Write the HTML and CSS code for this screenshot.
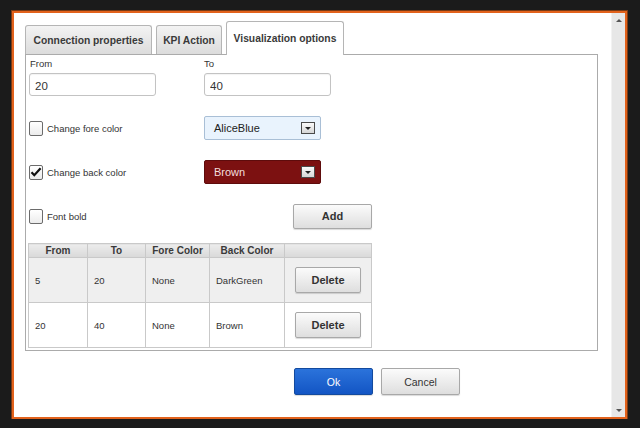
FILE: index.html
```html
<!DOCTYPE html>
<html lang="en">
<head>
  <meta charset="UTF-8">
  <title>KPI settings</title>
  <link rel="stylesheet" href="styles.css">
</head>
<body>

<!-- Dialog window -->
<div class="dialog">
  <div class="dialog-body">

    <!-- Tabs -->
    <div class="tabs">
      <div class="tab tab-conn">Connection properties</div>
      <div class="tab tab-kpi">KPI Action</div>
      <div class="tab tab-vis active">Visualization options</div>
    </div>

    <!-- Tab panel -->
    <div class="panel">
      <div class="row labels">
        <div class="col-left">From</div>
        <div class="col-right">To</div>
      </div>
      <div class="row inputs">
        <div class="col-left"><input type="text" class="text-box" value="20"></div>
        <div class="col-right"><input type="text" class="text-box" value="40"></div>
      </div>

      <div class="row option option-fore">
        <div class="col-left">
          <label class="check"><span class="box"></span>Change fore color</label>
        </div>
        <div class="col-right">
          <div class="select select-light">
            <span>AliceBlue</span>
            <span class="arrow"></span>
          </div>
        </div>
      </div>

      <div class="row option option-back">
        <div class="col-left">
          <label class="check">
            <span class="box">
              <svg width="12" height="12" viewBox="0 0 12 12"><path d="M1.5 6.2 L4.3 9.2 L10.6 2.2" fill="none" stroke="#111" stroke-width="2.2"/></svg>
            </span>Change back color
          </label>
        </div>
        <div class="col-right">
          <div class="select select-brown">
            <span>Brown</span>
            <span class="arrow"></span>
          </div>
        </div>
      </div>

      <div class="row option option-bold">
        <div class="col-left">
          <label class="check"><span class="box"></span>Font bold</label>
        </div>
        <div class="col-right">
          <button class="btn btn-add">Add</button>
        </div>
      </div>

      <table class="ranges">
        <thead>
          <tr>
            <th class="c-from">From</th>
            <th class="c-to">To</th>
            <th class="c-fore">Fore Color</th>
            <th class="c-back">Back Color</th>
            <th class="c-act"></th>
          </tr>
        </thead>
        <tbody>
          <tr class="alt">
            <td>5</td>
            <td>20</td>
            <td>None</td>
            <td>DarkGreen</td>
            <td><button class="btn btn-del">Delete</button></td>
          </tr>
          <tr>
            <td>20</td>
            <td>40</td>
            <td>None</td>
            <td>Brown</td>
            <td><button class="btn btn-del">Delete</button></td>
          </tr>
        </tbody>
      </table>
    </div>

    <!-- Dialog buttons -->
    <div class="actions">
      <button class="btn btn-ok">Ok</button>
      <button class="btn btn-cancel">Cancel</button>
    </div>
  </div>

  <!-- Scrollbar -->
  <div class="scrollbar">
    <span class="up"></span>
    <span class="down"></span>
  </div>
</div>

</body>
</html>
```

FILE: styles.css
```css
body {
  margin: 0;
  padding: 11px 0 0 12px;
  background-color: #1b1b1b;
  font-family: 'Liberation Sans', Arial, sans-serif;
  color: #333;
}

.dialog {
  width: 611px;
  height: 404px;
  border: 2px solid #e2621c;
  background-color: #fff;
  display: flex;
  box-shadow: 0 0 0 1px #7a3a14;
}

.dialog-body {
  flex: 1;
  padding: 8px 0 0 11px;
}

/* Tabs */
.tabs {
  display: flex;
  align-items: flex-end;
  gap: 4px;
  height: 33px;
}

.tab {
  box-sizing: border-box;
  height: 29px;
  border: 1px solid #b5b5b5;
  border-bottom: none;
  border-radius: 3px 3px 0 0;
  background: linear-gradient(#f3f3f3, #dcdcdc);
  font-size: 10.3px;
  font-weight: bold;
  color: #3a3a3a;
  display: flex;
  align-items: center;
  justify-content: center;
}

.tab-conn { width: 127px; }
.tab-kpi { width: 66px; }

.tab-vis {
  width: 118px;
  height: 34px;
  margin-bottom: -1px;
  background: #fff;
  position: relative;
  z-index: 1;
}

/* Panel */
.panel {
  box-sizing: border-box;
  width: 573px;
  height: 297px;
  border: 1px solid #ababab;
  padding: 2px 0 0 3px;
}

.row {
  display: flex;
  align-items: center;
}

.col-left {
  width: 175px;
}

.labels {
  font-size: 9.5px;
  height: 12px;
  padding-left: 1px;
}

.labels .col-left {
  width: 174px;
}

.inputs {
  margin-top: 4px;
}

.text-box {
  box-sizing: border-box;
  width: 127px;
  height: 23px;
  border: 1px solid #c3c3c3;
  border-radius: 3px;
  padding: 2px 5px 0;
  font-family: 'Liberation Sans', Arial, sans-serif;
  font-size: 11.5px;
  color: #333;
  box-shadow: inset 0 1px 1px rgba(0, 0, 0, 0.05);
}

.option {
  height: 24px;
}

.option-fore { margin-top: 20px; }
.option-back { margin-top: 20px; }
.option-bold { margin-top: 20px; }

.check {
  display: flex;
  align-items: center;
  font-size: 9.5px;
  color: #333;
}

.check .box {
  box-sizing: border-box;
  width: 14px;
  height: 15px;
  border: 1px solid #6b6b6b;
  border-radius: 2px;
  background: linear-gradient(#fff, #ececec);
  margin-right: 4px;
  display: flex;
  align-items: center;
  justify-content: center;
}

.select {
  box-sizing: border-box;
  width: 117px;
  height: 24px;
  border-radius: 2px;
  padding: 0 5px 0 9px;
  display: flex;
  align-items: center;
  justify-content: space-between;
  font-size: 11px;
}

.select-light {
  background-color: #e9f3fd;
  border: 1px solid #a9bfd6;
  color: #222;
}

.select-brown {
  background-color: #7c1111;
  border: 1px solid #5e0c0c;
  color: #f3dede;
}

.select .arrow {
  box-sizing: border-box;
  width: 14px;
  height: 12px;
  border: 1px solid #4a4a4a;
  background: linear-gradient(#fafafa, #d6d6d6);
  position: relative;
}

.select .arrow::after {
  content: '';
  position: absolute;
  left: 3px;
  top: 4px;
  border-left: 3px solid transparent;
  border-right: 3px solid transparent;
  border-top: 3px solid #222;
}

/* Buttons */
.btn {
  box-sizing: border-box;
  border: 1px solid #a8a8a8;
  border-radius: 2px;
  background: linear-gradient(#fbfbfb, #dedede);
  font-family: 'Liberation Sans', Arial, sans-serif;
  font-size: 11px;
  font-weight: bold;
  color: #333;
  box-shadow: 0 1px 1px rgba(0, 0, 0, 0.15);
  padding: 0;
}

.btn-add {
  width: 79px;
  height: 25px;
  margin-left: 89px;
}

/* Range table */
.ranges {
  margin: 15px 0 0 -1px;
  border-collapse: collapse;
  font-size: 9.5px;
  color: #333;
}

.ranges th,
.ranges td {
  border: 1px solid #c9c9c9;
  padding: 0;
}

.ranges th {
  height: 13px;
  background: linear-gradient(#ececec, #d9d9d9);
  font-size: 10px;
  font-weight: bold;
  color: #3a3a3a;
  text-align: center;
}

.ranges td {
  height: 44px;
  padding-left: 6px;
}

.ranges tr.alt td {
  background-color: #efefef;
}

.c-from { width: 58px; }
.c-to { width: 57px; }
.c-fore { width: 63px; }
.c-back { width: 74px; }
.c-act { width: 86px; }

.btn-del {
  width: 66px;
  height: 26px;
  margin-left: 4px;
  font-size: 11px;
}

/* Dialog actions */
.actions {
  display: flex;
  gap: 8px;
  margin: 17px 0 0 269px;
}

.btn-ok {
  width: 79px;
  height: 27px;
  background: linear-gradient(#2b73db, #1355c4);
  border-color: #134a9e;
  color: #fff;
  font-weight: normal;
  font-size: 10.5px;
}

.btn-cancel {
  width: 79px;
  height: 27px;
  font-weight: normal;
  font-size: 10.5px;
}

/* Scrollbar */
.scrollbar {
  width: 13px;
  background-color: #e7e7e7;
  border-left: 1px solid #f2f2f2;
  display: flex;
  flex-direction: column;
  justify-content: space-between;
  align-items: center;
  padding: 6px 0 5px;
}

.scrollbar .up {
  border-left: 3px solid transparent;
  border-right: 3px solid transparent;
  border-bottom: 3px solid #555;
}

.scrollbar .down {
  border-left: 3px solid transparent;
  border-right: 3px solid transparent;
  border-top: 3px solid #555;
}
```
